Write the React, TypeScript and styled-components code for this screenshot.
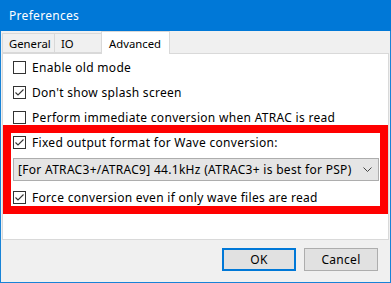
import React from 'react';
import styled, {createGlobalStyle} from "styled-components";

const GlobalStyle = createGlobalStyle`
    html, body {
        margin:0;
        padding:0;
        background:#ffffff;
    }
    body {
        font-family: "Noto Sans", "Open Sans", sans-serif;
        font-size:12px;
        letter-spacing:0.3px;
        color:#000000;
    }
`;

const Window = styled.div`
    width:391px;
    height:283px;
    box-sizing:border-box;
    display:flex;
    flex-direction:column;
    background-color:#f0f0f0;
    border:1px solid #1883d7;
    border-top:none;
`;

const TitleBar = styled.div`
    height:31px;
    flex-shrink:0;
    margin:0 -1px;
    padding-left:9px;
    display:flex;
    align-items:center;
    background-color:#0078d7;
    color:#ffffff;
    font-size:12px;
`;

const TabStrip = styled.div`
    height:22px;
    flex-shrink:0;
    margin:0 1px;
    display:flex;
    align-items:flex-end;
    position:relative;
    z-index:1;
`;

const Tab = styled.div<{$active?: boolean; $width: number}>`
    width:${({$width}) => $width}px;
    box-sizing:border-box;
    height:${({$active}) => $active ? 23 : 20}px;
    margin-bottom:${({$active}) => $active ? -1 : 0}px;
    padding:${({$active}) => $active ? "1px 0 0 7px" : "0 0 0 6px"};
    display:flex;
    align-items:center;
    font-size:11.3px;
    letter-spacing:0;
    background-color:${({$active}) => $active ? "#ffffff" : "#f0f0f0"};
    border:1px solid #d9d9d9;
    border-bottom:${({$active}) => $active ? "none" : "1px solid #d9d9d9"};
    & + & {
        margin-left:-1px;
    }
`;

const Panel = styled.div`
    height:187px;
    flex-shrink:0;
    box-sizing:border-box;
    margin:0 1px;
    padding-top:7px;
    display:flex;
    flex-direction:column;
    background-color:#ffffff;
    border:1px solid #d9d9d9;
`;

const Row = styled.label<{$gap?: number; $last?: boolean}>`
    display:flex;
    align-items:center;
    height:13px;
    padding-left:${({$gap}) => $gap ?? 10}px;
    margin-bottom:${({$last}) => $last ? 0 : 12}px;
    gap:6px;
    white-space:nowrap;
`;

const Box = styled.span`
    width:13px;
    height:13px;
    box-sizing:border-box;
    flex-shrink:0;
    border:1px solid #333333;
    background:#ffffff;
    display:flex;
    align-items:center;
    justify-content:center;
`;

const Highlight = styled.div`
    margin-top:-11px;
    height:89px;
    box-sizing:border-box;
    border:8px solid #ff0000;
    padding-top:3px;
    display:flex;
    flex-direction:column;
`;

const Combo = styled.div`
    height:23px;
    box-sizing:border-box;
    margin:9px 1px 10px 2px;
    padding:0 6px 0 4px;
    display:flex;
    align-items:center;
    justify-content:space-between;
    background-color:#e5e5e5;
    border:1px solid #adadad;
    white-space:nowrap;
`;

const Footer = styled.div`
    flex:1;
    display:flex;
    justify-content:flex-end;
    align-items:flex-start;
    padding:8px 12px 0 0;
    gap:8px;
`;

const Button = styled.button<{$default?: boolean}>`
    width:74px;
    height:23px;
    box-sizing:border-box;
    padding:0;
    font-family:inherit;
    font-size:12px;
    letter-spacing:inherit;
    color:#000000;
    background-color:#e1e1e1;
    border:${({$default}) => $default ? "2px solid #0078d7" : "1px solid #adadad"};
`;

const Check = ({checked}: {checked?: boolean}) => (
    <Box>
        {checked &&
            <svg width="11" height="11" viewBox="0 0 11 11">
                <path d="M1.5 5.5 L4 8 L9.5 2.5" fill="none" stroke="#333333" strokeWidth="1.1"/>
            </svg>
        }
    </Box>
);

const Chevron = () => (
    <svg width="9" height="5" viewBox="0 0 9 5">
        <path d="M0.5 0.5 L4.5 4.5 L8.5 0.5" fill="none" stroke="#444444" strokeWidth="1"/>
    </svg>
);

const App = () => {
    return (
        <>
            <GlobalStyle/>
            <Window>
                <TitleBar>Preferences</TitleBar>
                <TabStrip>
                    <Tab $width={53}>General</Tab>
                    <Tab $width={48}>IO</Tab>
                    <Tab $width={69} $active>Advanced</Tab>
                </TabStrip>
                <Panel>
                    <Row>
                        <Check/>
                        Enable old mode
                    </Row>
                    <Row>
                        <Check checked/>
                        Don't show splash screen
                    </Row>
                    <Row>
                        <Check/>
                        Perform immediate conversion when ATRAC is read
                    </Row>
                    <Highlight>
                        <Row $gap={2} $last>
                            <Check checked/>
                            Fixed output format for Wave conversion:
                        </Row>
                        <Combo>
                            [For ATRAC3+/ATRAC9] 44.1kHz (ATRAC3+ is best for PSP)
                            <Chevron/>
                        </Combo>
                        <Row $gap={2} $last>
                            <Check checked/>
                            Force conversion even if only wave files are read
                        </Row>
                    </Highlight>
                </Panel>
                <Footer>
                    <Button $default>OK</Button>
                    <Button>Cancel</Button>
                </Footer>
            </Window>
        </>
    );
};

export default App;
